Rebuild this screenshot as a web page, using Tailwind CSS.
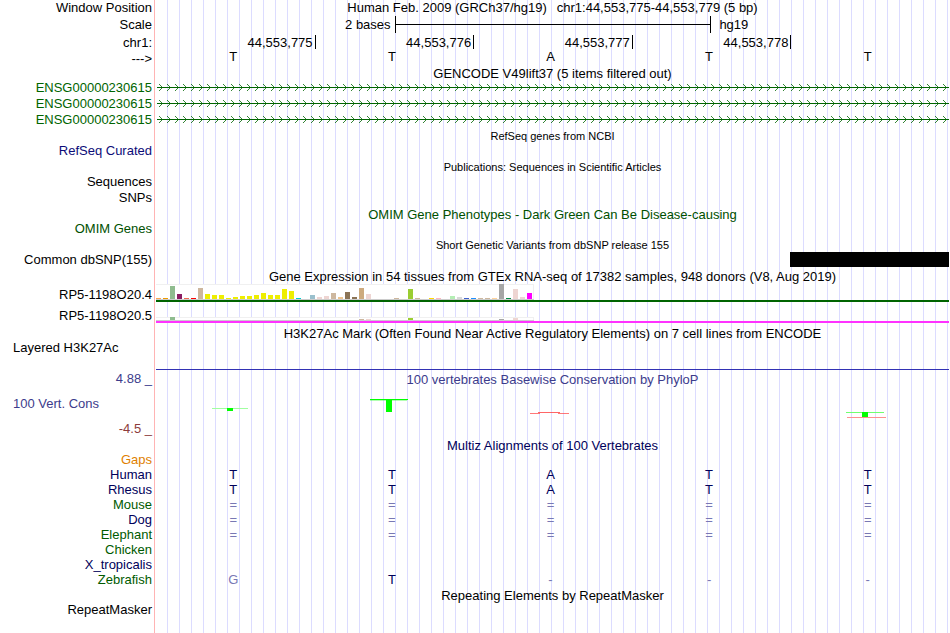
<!DOCTYPE html>
<html lang="en">
<head>
    <meta charset="UTF-8">
    <meta name="viewport" content="width=device-width, initial-scale=1.0">
    <title>Human chr1:44,553,775-44,553,779 - Genome Browser</title>
    <script src="https://cdn.jsdelivr.net/npm/@tailwindcss/browser@4"></script>
</head>
<body class="bg-white pr-px">
    <!-- Label divider and the 12px guide lines are the backgrounds of main -->
    <main class="min-h-screen overflow-hidden whitespace-nowrap font-['Liberation_Sans',Arial,sans-serif] text-[13px] leading-[15px] text-black bg-[linear-gradient(to_right,white_154px,#ffb4b4_154px,#ffb4b4_155px,white_155px,white_156px,transparent_156px),repeating-linear-gradient(to_right,transparent_0px,transparent_11px,#dcdcff_11px,#dcdcff_12px)]">

        <!-- Position and ruler -->
        <header>
            <div class="grid grid-cols-[156px_1fr] h-4">
                <div class="text-right pr-1">Window Position</div>
                <h1 class="flex justify-center gap-[10px]">
                    <span>Human Feb. 2009 (GRCh37/hg19)</span>
                    <span>chr1:44,553,775-44,553,779 (5 bp)</span>
                </h1>
            </div>
            <div class="grid grid-cols-[156px_1fr] h-[18px]">
                <div class="text-right pr-1 leading-[17px]">Scale</div>
                <div class="grid grid-cols-[30%_40%_30%] ml-px items-start leading-[17px]">
                    <div class="text-right pr-1">2 bases</div>
                    <div class="flex items-center h-[17px] border-x border-black">
                        <div class="w-full h-px bg-black"></div>
                    </div>
                    <div class="pl-2">hg19</div>
                </div>
            </div>
            <div class="grid grid-cols-[156px_1fr] h-4 items-center">
                <div class="text-right pr-1">chr1:</div>
                <div class="grid grid-cols-5 ml-px -mr-px text-right">
                    <div class="h-[14px] pr-[2px] border-r border-black">44,553,775</div>
                    <div class="h-[14px] pr-[2px] border-r border-black">44,553,776</div>
                    <div class="h-[14px] pr-[2px] border-r border-black">44,553,777</div>
                    <div class="h-[14px] pr-[2px] border-r border-black">44,553,778</div>
                </div>
            </div>
            <div class="grid grid-cols-[156px_1fr] h-[15px]">
                <div class="text-right pr-1 leading-[17px]">---&gt;</div>
                <div class="grid grid-cols-5 text-center leading-[13px]">
                    <div class="pr-1">T</div>
                    <div class="pr-1">T</div>
                    <div class="pr-1">A</div>
                    <div class="pr-1">T</div>
                    <div class="pr-1">T</div>
                </div>
            </div>
        </header>

        <!-- GENCODE -->
        <section class="text-[#006400]">
            <h2 class="ml-[156px] h-[15px] text-center leading-[17px] text-black">GENCODE V49lift37 (5 items filtered out)</h2>
            <div class="grid grid-cols-[156px_1fr] h-4">
                <div class="text-right pr-1">ENSG00000230615</div>
                <svg class="block w-full h-4" aria-hidden="true">
                    <defs>
                        <pattern id="strand" width="8" height="16" patternUnits="userSpaceOnUse">
                            <path d="M3 4L6.5 7.5L3 11" fill="none" stroke="#006400" stroke-width="0.8"/>
                        </pattern>
                    </defs>
                    <rect width="100%" height="16" fill="url(#strand)"/>
                    <rect x="1" y="7" width="100%" height="1" fill="#006400"/>
                </svg>
            </div>
            <div class="grid grid-cols-[156px_1fr] h-4">
                <div class="text-right pr-1">ENSG00000230615</div>
                <svg class="block w-full h-4" aria-hidden="true">
                    <rect width="100%" height="16" fill="url(#strand)"/>
                    <rect x="1" y="7" width="100%" height="1" fill="#006400"/>
                </svg>
            </div>
            <div class="grid grid-cols-[156px_1fr] h-4">
                <div class="text-right pr-1">ENSG00000230615</div>
                <svg class="block w-full h-4" aria-hidden="true">
                    <rect width="100%" height="16" fill="url(#strand)"/>
                    <rect x="1" y="7" width="100%" height="1" fill="#006400"/>
                </svg>
            </div>
        </section>

        <!-- RefSeq -->
        <section>
            <h2 class="ml-[156px] h-[15px] text-center text-[11px] leading-[17px]">RefSeq genes from NCBI</h2>
            <div class="w-[156px] h-4 text-right pr-1 text-[#0c0c78]">RefSeq Curated</div>
        </section>

        <!-- Publications -->
        <section>
            <h2 class="ml-[156px] h-[15px] text-center text-[11px] leading-[17px]">Publications: Sequences in Scientific Articles</h2>
            <div class="w-[156px] h-4 text-right pr-1">Sequences</div>
            <div class="w-[156px] h-4 text-right pr-1">SNPs</div>
        </section>

        <!-- OMIM -->
        <section class="text-[#005000]">
            <h2 class="ml-[156px] h-[15px] text-center leading-[17px]">OMIM Gene Phenotypes - Dark Green Can Be Disease-causing</h2>
            <div class="w-[156px] h-4 text-right pr-1">OMIM Genes</div>
        </section>

        <!-- dbSNP -->
        <section>
            <h2 class="ml-[156px] h-[15px] text-center text-[11px] leading-[17px]">Short Genetic Variants from dbSNP release 155</h2>
            <div class="grid grid-cols-[156px_1fr] h-4">
                <div class="text-right pr-1">Common dbSNP(155)</div>
                <div class="w-1/5 h-[15px] ml-auto bg-black"></div>
            </div>
        </section>

        <!-- GTEx -->
        <section>
            <h2 class="ml-[156px] h-[15px] text-center leading-[17px]">Gene Expression in 54 tissues from GTEx RNA-seq of 17382 samples, 948 donors (V8, Aug 2019)</h2>
            <div class="grid grid-cols-[156px_1fr] h-6">
                <div class="text-right pr-1 leading-6">RP5-1198O20.4</div>
                <div>
                    <svg id="gtex4" class="block w-[378px] h-[17px]" role="img" aria-label="RP5-1198O20.4 expression"></svg>
                    <div class="h-[2px] bg-[#006400]"></div>
                </div>
            </div>
            <div class="grid grid-cols-[156px_1fr] h-[17px]">
                <div class="text-right pr-1 leading-[17px]">RP5-1198O20.5</div>
                <div>
                    <svg id="gtex5" class="block w-[378px] h-[14px]" role="img" aria-label="RP5-1198O20.5 expression"></svg>
                    <div class="h-[2px] bg-[#ff32ff]"></div>
                </div>
            </div>
        </section>

        <!-- H3K27Ac -->
        <section>
            <h2 class="ml-[156px] h-[17px] text-center leading-[19px]">H3K27Ac Mark (Often Found Near Active Regulatory Elements) on 7 cell lines from ENCODE</h2>
            <div class="grid grid-cols-[156px_1fr] h-[29px]">
                <div class="pl-[13px] leading-[13px]">Layered H3K27Ac</div>
                <div class="border-b border-[#3232b4]"></div>
            </div>
        </section>

        <!-- Conservation -->
        <section class="text-[#3c3c8c]">
            <div class="grid grid-cols-[156px_1fr] h-[18px] leading-[18px]">
                <div class="text-right pr-1">4.88 _</div>
                <h2 class="text-center leading-5">100 vertebrates Basewise Conservation by PhyloP</h2>
            </div>
            <div class="grid grid-cols-[156px_1fr]">
                <div>
                    <div class="h-8 pl-[13px] leading-8">100 Vert. Cons</div>
                    <div class="h-[17px] text-right pr-1 leading-[17px] text-[#8c3c3c]">-4.5 _</div>
                </div>
                <svg class="block w-full h-[49px]" viewBox="0 0 793 49" preserveAspectRatio="none" role="img" aria-label="PhyloP scores">
                    <rect x="56" y="20" width="36" height="1" fill="#a0ffa0"/>
                    <rect x="71" y="20" width="6" height="3" fill="#00ff00"/>
                    <rect x="214" y="11" width="38" height="1" fill="#00ff00"/>
                    <rect x="214" y="12" width="37" height="1" fill="#00ff00" opacity=".3"/>
                    <rect x="230" y="12" width="6" height="12" fill="#00ff00"/>
                    <rect x="374" y="25" width="10" height="1" fill="#ff4040" opacity=".7"/>
                    <rect x="382" y="24" width="22" height="1" fill="#ff4040" opacity=".8"/>
                    <rect x="402" y="25" width="11" height="1" fill="#ff4040" opacity=".7"/>
                    <rect x="690" y="24" width="38" height="1" fill="#70ff70"/>
                    <rect x="691" y="29" width="39" height="1" fill="#ff9090"/>
                    <rect x="706" y="24" width="6" height="5" fill="#00ff00"/>
                </svg>
            </div>
        </section>

        <!-- Multiz alignment -->
        <section class="text-[#00005a]">
            <h2 class="ml-[156px] h-[15px] text-center leading-[17px]">Multiz Alignments of 100 Vertebrates</h2>
            <table class="w-full table-fixed border-collapse text-center [&_td]:p-0 [&_td]:pr-1 [&_th]:p-0 [&_th]:pr-1 [&_th]:w-[156px] [&_th]:text-right [&_th]:font-normal [&_tr]:h-[15px]">
                <tbody>
                    <tr><th scope="row" class="text-[#e08000]">Gaps</th><td></td><td></td><td></td><td></td><td></td></tr>
                    <tr><th scope="row">Human</th><td>T</td><td>T</td><td>A</td><td>T</td><td>T</td></tr>
                    <tr><th scope="row">Rhesus</th><td>T</td><td>T</td><td>A</td><td>T</td><td>T</td></tr>
                    <tr class="text-[#7878b4]"><th scope="row" class="text-[#005a00]">Mouse</th><td>=</td><td>=</td><td>=</td><td>=</td><td>=</td></tr>
                    <tr class="text-[#7878b4]"><th scope="row" class="text-[#00005a]">Dog</th><td>=</td><td>=</td><td>=</td><td>=</td><td>=</td></tr>
                    <tr class="text-[#7878b4]"><th scope="row" class="text-[#005a00]">Elephant</th><td>=</td><td>=</td><td>=</td><td>=</td><td>=</td></tr>
                    <tr><th scope="row" class="text-[#005a00]">Chicken</th><td></td><td></td><td></td><td></td><td></td></tr>
                    <tr><th scope="row">X_tropicalis</th><td></td><td></td><td></td><td></td><td></td></tr>
                    <tr class="text-[#7878b4]"><th scope="row" class="text-[#005a00]">Zebrafish</th><td>G</td><td class="text-[#00005a]">T</td><td>-</td><td>-</td><td>-</td></tr>
                </tbody>
            </table>
        </section>

        <!-- RepeatMasker -->
        <section>
            <h2 class="ml-[156px] h-[15px] text-center leading-[17px]">Repeating Elements by RepeatMasker</h2>
            <div class="w-[156px] h-[15px] text-right pr-1">RepeatMasker</div>
        </section>
    </main>

    <script>
        // [tissue index, bar height, tissue colour]
        const gtex4 = [
            [0, 1, '#ffa54f'], [1, 1, '#ee9a00'], [2, 13, '#8fbc8f'], [3, 5, '#8b1c62'], [4, 1, '#ee6a50'],
            [5, 1, '#ff0000'], [6, 11, '#cdb79e'], [7, 5, '#eeee00'], [8, 4, '#eeee00'], [9, 4, '#eeee00'],
            [10, 1, '#eeee00'], [11, 2, '#eeee00'], [12, 3, '#eeee00'], [13, 3, '#eeee00'], [14, 4, '#eeee00'],
            [15, 6, '#eeee00'], [16, 4, '#eeee00'], [17, 4, '#eeee00'], [18, 10, '#eeee00'], [19, 8, '#eeee00'],
            [20, 1, '#00cdcd'], [22, 4, '#9ac0cd'], [23, 2, '#eed5d2'], [24, 3, '#eed5d2'], [25, 6, '#cdb79e'],
            [26, 2, '#eec591'], [27, 7, '#8b7355'], [28, 2, '#8b7355'], [29, 11, '#cdaa7d'], [30, 5, '#eed5d2'],
            [34, 1, '#cdb79e'], [36, 10, '#9acd32'], [37, 1, '#cdb79e'], [39, 1, '#ffd700'], [40, 1, '#ffb6c1'],
            [42, 3, '#b4eeb4'], [43, 2, '#d9d9d9'], [44, 1, '#3a5fcd'], [45, 1, '#1e90ff'], [46, 1, '#cdb79e'],
            [47, 1, '#cdb79e'], [48, 1, '#ffd39b'], [49, 15, '#a6a6a6'], [50, 1, '#008b45'], [51, 10, '#eed5d2'],
            [52, 2, '#eed5d2'], [53, 6, '#ff00ff']
        ];
        const gtex5 = [
            [2, 3, '#8fbc8f'], [29, 1, '#cdb79e'], [30, 1, '#eed5d2'], [36, 2, '#9acd32'], [49, 1, '#a6a6a6'], [51, 2, '#eed5d2']
        ];

        function drawBars(id, top, base, bars) {
            let out = `<rect y="${top}" width="378" height="${base - top}" fill="#f0f0f0"/>`;
            out += `<rect y="${top + 1}" width="377" height="${base - top - 1}" fill="#ffffff"/>`;
            out += `<rect y="${base}" width="378" height="1" fill="#cccccc"/>`;
            for (const [i, h, color] of bars) {
                out += `<rect x="${i * 7}" y="${base - h}" width="5" height="${h}" fill="${color}"/>`;
            }
            document.getElementById(id).innerHTML = out;
        }

        drawBars('gtex4', 1, 16, gtex4);
        drawBars('gtex5', 10, 13, gtex5);
    </script>
</body>
</html>
